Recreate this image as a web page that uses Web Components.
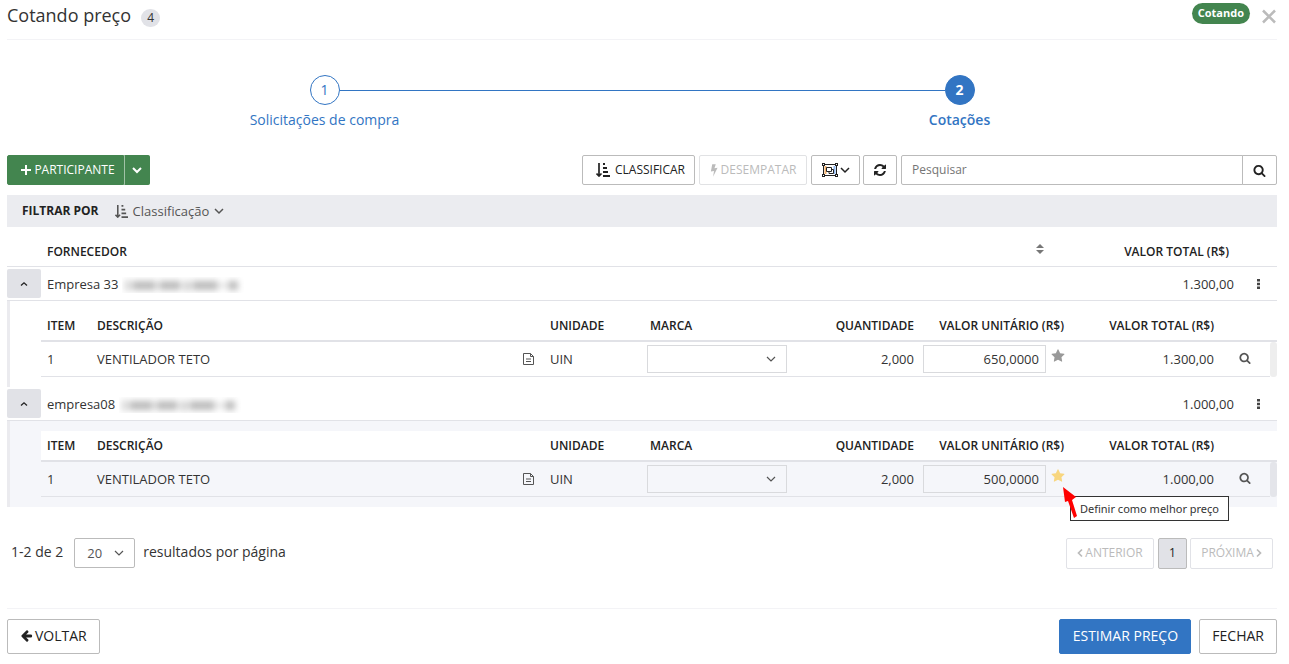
<!DOCTYPE html>
<html lang="pt-BR">
<head>
<meta charset="utf-8">
<title>Cotando preço</title>
<meta name="viewport" content="width=device-width, initial-scale=1">
<style>
  body { margin: 0; background: #fff; color: #333; font: 13px/20px "Open Sans", "Noto Sans", sans-serif; }
</style>
</head>
<body>
<quote-page>
  <page-header slot="header" count="4" status="Cotando">Cotando preço</page-header>
  <step-list slot="steps">
    <step-item number="1">Solicitações de compra</step-item>
    <step-item number="2" current>Cotações</step-item>
  </step-list>
  <quote-toolbar slot="toolbar"></quote-toolbar>
  <filter-bar slot="filter"></filter-bar>
  <supplier-table slot="table"></supplier-table>
  <page-nav slot="nav"></page-nav>
  <page-footer slot="footer"></page-footer>
</quote-page>

<script>
const ICONS = {
  plus: '<path d="M6 1v10M1 6h10" stroke="currentColor" stroke-width="2" fill="none"/>|12 12',
  close: '<path d="M1.500 1.500l12 12M13.500 1.500l-12 12" stroke="currentColor" stroke-width="2.500" fill="none"/>|15 15',
  down: '<path d="M1 3l4 4 4-4" stroke="currentColor" stroke-width="1.500" fill="none"/>|10 10',
  thin: '<path d="M1 3l4 4 4-4" stroke="currentColor" stroke-width="1.200" fill="none"/>|10 10',
  downbold: '<path d="M1 3l4 4 4-4" stroke="currentColor" stroke-width="2" fill="none"/>|10 10',
  up: '<path d="M2 6.500L5 3.800l3 2.700" stroke="currentColor" stroke-width="1.300" fill="none"/>|10 10',
  left: '<path d="M5 1.500L1.500 5 5 8.500" stroke="currentColor" stroke-width="1.700" fill="none"/>|6 10',
  right: '<path d="M1 1.500L4.500 5 1 8.500" stroke="currentColor" stroke-width="1.700" fill="none"/>|6 10',
  sort: '<path d="M3 0v12M0.500 10.500L3 13 5.500 10.500" stroke="currentColor" stroke-width="1.700" fill="none"/><path d="M7 0h2v2H7zM7 4h4v2H7zM7 8h5v2H7zM7 12h7v2H7z" fill="currentColor"/>|14 14',
  bolt: '<path d="M2.500 0h4L5 4.500 8.500 3.800 3.500 14l1-6.500L1 8.200z" fill="currentColor"/>|9 14',
  updown: '<path d="M0 4L4 0l4 4zM0 6h8L4 10z" fill="currentColor"/>|8 10',
  dots: '<path d="M0 0h3v2.500H0zM0 3.800h3v2.500H0zM0 7.500h3V10H0z" fill="currentColor"/>|3 10',
  file: '<path d="M0.500 0.500h7l3 3v8h-10zM7.500 0.500v3h3M3 6h5M3 8.500h5" stroke="currentColor" fill="none"/>|11 12',
  group: '<path d="M3.500 3v8" stroke="#f3b06a" stroke-width="2"/><path d="M12.500 3v8" stroke="#8fb8f0" stroke-width="2"/><path d="M1.500 1.500h13v11h-13z" stroke="#222" fill="none"/><path d="M4.500 4.500h5v4h-5zM9.500 6.500h2v4H7v-2" stroke="#222" fill="none"/><path d="M0 0h3v3H0zM13 0h3v3h-3zM0 11h3v3H0zM13 11h3v3h-3z" fill="#222"/><path d="M1 1h1v1H1zM14 1h1v1h-1zM1 12h1v1H1zM14 12h1v1h-1z" fill="#fff"/>|16 14',
  refresh: '<path d="M1639 1056q0 5-1 7-64 268-268 434.500t-478 166.500q-146 0-282.500-55t-243.500-157l-129 129q-19 19-45 19t-45-19-19-45v-448q0-26 19-45t45-19h448q26 0 45 19t19 45-19 45l-137 137q71 66 161 102t187 36q134 0 250-65t186-179q11-17 53-117 8-23 30-23h192q13 0 22.500 9.500t9.500 22.500zm25-800v448q0 26-19 45t-45 19h-448q-26 0-45-19t-19-45 19-45l138-138q-148-137-349-137-134 0-250 65t-186 179q-11 17-53 117-8 23-30 23h-199q-13 0-22.500-9.500t-9.500-22.500v-7q65-268 270-434.500t480-166.500q146 0 284 55.500t245 156.500l130-129q19-19 45-19t45 19 19 45z" fill="currentColor"/>|1792 1792',
  search: '<path d="M1216 832q0-185-131.500-316.500t-316.500-131.500-316.500 131.500-131.500 316.500 131.500 316.500 316.500 131.500 316.500-131.500 131.500-316.500zm512 832q0 52-38 90t-90 38q-54 0-90-38l-343-342q-179 124-399 124-143 0-273.500-55.500t-225-150-150-225-55.500-273.500 55.500-273.500 150-225 225-150 273.500-55.500 273.500 55.500 225 150 150 225 55.500 273.500q0 220-124 399l343 343q37 37 37 90z" fill="currentColor"/>|1792 1792',
  star: '<path d="M1728 647q0 22-26 48l-363 354 86 500q1 7 1 20 0 21-10.500 35.500t-30.500 14.500q-19 0-40-12l-449-236-449 236q-22 12-40 12-21 0-31.500-14.500t-10.500-35.500q0-6 2-20l86-500-364-354q-25-27-25-48 0-37 56-46l502-73 225-455q19-41 49-41t49 41l225 455 502 73q56 9 56 46z" fill="currentColor"/>|1792 1792',
  back: '<path d="M1664 896v128q0 53-32.500 90.500t-84.500 37.500h-704l293 294q38 36 38 90t-38 90l-75 76q-37 37-90 37-52 0-91-37l-651-652q-37-37-37-90 0-52 37-91l651-650q38-38 91-38 52 0 90 38l75 74q38 38 38 91t-38 91l-293 293h704q52 0 84.500 37.500t32.500 90.500z" fill="currentColor"/>|1792 1920',
  arrow: '<path d="M0 0l2 15 3-1 6 17 3-2L9 13l4-3z" fill="#f00"/>|16 32'
};

const BASE = `
  *, *::before { box-sizing: border-box; }
  :host { display: block; }
  button, input, select { font: inherit; color: inherit; margin: 0; }
  button { display: inline-flex; align-items: center; justify-content: center; gap: 4px; padding: 0 12px;
           border: 1px solid #bbb; border-radius: 2px; background: #fff; color: #222; white-space: nowrap; }
  select { appearance: none; background: transparent; outline: 0; border-radius: 0; }
  .pick { position: relative; display: inline-block; }
  .pick ui-icon { position: absolute; top: 0; bottom: 0; right: 11px; margin: auto 0; pointer-events: none; }
`;

function define(name, css, html) {
  customElements.define(name, class extends HTMLElement {
    connectedCallback() {
      if (this.shadowRoot) return;
      const t = document.createElement('template');
      t.innerHTML = `<style>${BASE}${css}</style>` + (typeof html === 'function' ? html(this) : html);
      this.attachShadow({ mode: 'open' }).append(t.content.cloneNode(true));
    }
  });
}

define('ui-icon', `
  :host { display: inline-block; flex: none; width: var(--w, 12px); height: var(--h, 12px); }
  svg { display: block; width: 100%; height: 100%; }
`, el => {
  const [shape, box] = ICONS[el.getAttribute('name')].split('|');
  return `<svg viewBox="0 0 ${box}" aria-hidden="true">${shape}</svg>`;
});

define('quote-page', `
  :host { padding: 0 12px 10px 7px; }
`, `<slot name="header"></slot>
<main><slot name="steps"></slot><slot name="toolbar"></slot><slot name="filter"></slot><slot name="table"></slot><slot name="nav"></slot></main>
<slot name="footer"></slot>`);

define('page-header', `
  header { display: flex; align-items: flex-start; height: 40px; border-bottom: 1px solid #f3f3f6; }
  h1 { margin: 3px 10px 0 0; font-size: 18px; line-height: 24px; font-weight: 400; }
  .count { margin-top: 9px; width: 19px; height: 18px; border-radius: 9px; background: #e1e2e7; font-size: 12px; line-height: 18px; text-align: center; }
  .status { margin: 3px 11px 0 auto; height: 21px; padding: 0 6px; border-radius: 11px; background: #43854f; color: #fff; font-size: 11px; line-height: 20px; font-weight: 700; }
  button { border: 0; padding: 0; margin-top: 9px; color: #bbb; --w: 16px; --h: 15px; }
`, el => `<header><h1><slot></slot></h1><span class="count">${el.getAttribute('count')}</span>
<span class="status">${el.getAttribute('status')}</span><button aria-label="Fechar janela"><ui-icon name="close"></ui-icon></button></header>`);

define('step-list', `
  nav { display: grid; grid-template-columns: 1fr 1fr; padding-top: 35px; height: 115px; }
`, '<nav aria-label="Etapas"><slot></slot></nav>');

define('step-item', `
  a { display: block; color: #3275c3; font-size: 14px; line-height: 20px; text-align: center; text-decoration: none; }
  .mark { display: flex; align-items: center; margin-bottom: 5px; }
  .mark::before, .mark::after { content: ""; flex: 1; height: 1px; background: #3275c3; }
  :host(:first-child) .mark::before, :host(:last-child) .mark::after { background: none; }
  .num { width: 30px; height: 30px; border: 1px solid #3275c3; border-radius: 50%; line-height: 28px; }
  :host([current]) a { font-weight: 600; }
  :host([current]) .num { background: #3275c3; color: #fff; font-weight: 700; }
`, el => `<a href="#etapa-${el.getAttribute('number')}"><span class="mark"><span class="num">${el.getAttribute('number')}</span></span><slot></slot></a>`);

define('quote-toolbar', `
  .bar { display: flex; height: 30px; gap: 4px; font-size: 12px; }
  .split { display: flex; margin-right: auto; }
  .split button { background: #43854f; border-color: #43854f; color: #fff; }
  .split .add { width: 117px; padding: 0; gap: 2px; border-radius: 2px 0 0 2px; padding-left: 4px; }
  .split .more { width: 26px; padding: 0; border-radius: 0 2px 2px 0; border-left-color: #a1c2a7; }
  .rank { width: 113px; gap: 5px; padding: 0 8px 0 12px; --w: 14px; --h: 14px; }
  .tie { width: 108px; gap: 3px; padding: 0; border-color: #e1e2e4; color: #bbb; --w: 8px; --h: 13px; }
  .group { width: 49px; gap: 2px; padding: 0; }
  .sync { width: 34px; padding: 0; margin-left: -1px; --w: 14px; --h: 14px; }
  form { display: flex; width: 376px; }
  input { flex: 1; min-width: 0; padding: 0 10px; border: 1px solid #bbb; border-radius: 2px 0 0 2px; outline: 0; background: #fff; }
  input::placeholder { color: #757575; opacity: 1; }
  form button { width: 35px; padding: 0; border-left-color: #bbb; margin-left: -1px; border-radius: 0 2px 2px 0; --w: 13px; --h: 13px; }
`, `<div class="bar">
  <div class="split"><button class="add"><ui-icon name="plus"></ui-icon>PARTICIPANTE</button><button class="more" aria-label="Mais opções"><ui-icon name="downbold" style="--w:10px;--h:10px"></ui-icon></button></div>
  <button class="rank"><ui-icon name="sort"></ui-icon>CLASSIFICAR</button>
  <button class="tie" disabled><ui-icon name="bolt"></ui-icon>DESEMPATAR</button>
  <button class="group" aria-label="Agrupar"><ui-icon name="group" style="--w:16px;--h:14px"></ui-icon><ui-icon name="down" style="--w:10px;--h:10px"></ui-icon></button>
  <button class="sync" aria-label="Atualizar"><ui-icon name="refresh"></ui-icon></button>
  <form role="search"><input type="search" placeholder="Pesquisar" aria-label="Pesquisar"><button type="button" aria-label="Buscar"><ui-icon name="search"></ui-icon></button></form>
</div>`);

define('filter-bar', `
  .bar { display: flex; align-items: center; height: 32px; margin-top: 10px; padding-left: 15px; background: #ebecf0; }
  strong { font-size: 12px; color: #222; font-weight: 700; margin-right: 16px; }
  button { padding: 0; border: 0; gap: 5px; background: none; color: #555; }
`, `<div class="bar"><strong>FILTRAR POR</strong><button><ui-icon name="sort" style="--w:13px;--h:13px"></ui-icon>Classificação<ui-icon name="down" style="--w:10px;--h:10px"></ui-icon></button></div>`);

define('masked-id', `
  :host { display: inline-block; width: 122px; height: 16px; vertical-align: middle; overflow: hidden; }
  svg { display: block; filter: blur(3px); }
`, `<svg width="122" height="16" aria-hidden="true">
<path d="M4 3h3v11H4zM10 4h24v9H10zM37 4h22v9H37zM63 4h4v10h-4zM70 4h26v9H70zM99 7h4v3h-4zM106 4h10v9h-10z" fill="#bbb"/></svg>`);

define('supplier-table', `
  table { width: 100%; border-collapse: separate; border-spacing: 0; table-layout: fixed; }
  th, td { padding: 0; text-align: left; }
  thead th { height: 40px; padding-top: 10px; border-bottom: 1px solid #e1e2e7; font-size: 12px; font-weight: 600; color: #222; }
  thead th:nth-child(2), .name { padding-left: 6px; }
  .supplier td { height: 34px; border-bottom: 1px solid #e1e2e7; }
  .toggle { width: 34px; height: 29px; padding: 0; border: 0; background: #e1e2e7; display: flex; --w: 10px; --h: 10px; }
  .num { text-align: right; padding-right: 3px; }
  thead .num { padding-right: 8px; }
  .menu { width: 100%; border: 0; background: none; padding: 0 0 0 2px; color: #444; --w: 3px; --h: 10px; }
  .sort { padding: 0; border: 0; color: #777; background: none; --w: 8px; --h: 10px; vertical-align: top; margin-top: 2px; }
  .detail td { height: 86px; padding: 10px 0 0 34px; vertical-align: top; box-shadow: inset 3px 0 #ebebef; }
  .best td { background: #f5f6fa; }
`, () => {
  const supplier = (name, total, unit, best) => `
  <tr class="supplier"><td><button class="toggle" aria-label="Recolher" aria-expanded="true"><ui-icon name="up"></ui-icon></button></td>
    <td class="name">${name} <masked-id></masked-id></td><td></td><td class="num">${total}</td><td><button class="menu" aria-label="Ações"><ui-icon name="dots"></ui-icon></button></td></tr>
  <tr class="detail${best ? ' best' : ''}"><td colspan="5"><item-table total="${total}" unit="${unit}"${best ? ' best' : ''}></item-table></td></tr>`;
  return `<table><colgroup><col style="width:34px"><col><col style="width:50px"><col style="width:151px"><col style="width:40px"></colgroup>
  <thead><tr><th></th><th>FORNECEDOR</th><th><button class="sort" aria-label="Ordenar"><ui-icon name="updown"></ui-icon></button></th><th class="num">VALOR TOTAL (R$)</th><th></th></tr></thead>
  <tbody>${supplier('Empresa 33', '1.300,00', '650,0000', false)}${supplier('empresa08', '1.000,00', '500,0000', true)}</tbody></table>`;
});

define('item-table', `
  table { width: 100%; border-collapse: separate; border-spacing: 0; table-layout: fixed; }
  th, td { padding: 0 6px; text-align: left; }
  th { height: 31px; background: #fff; border-bottom: 2px solid #e1e2e7; font-size: 12px; font-weight: 600; color: #222; white-space: nowrap; }
  td { height: 35px; border-bottom: 1px solid #e1e2e7; }
  td.field { padding: 0 3px; }
  .num { text-align: right; }
  .desc { display: flex; align-items: center; justify-content: space-between; padding-right: 4px; color: #555; --w: 11px; --h: 12px; }
  .desc span { color: #333; }
  .pick, select { display: block; width: 140px; height: 28px; }
  .pick { --w: 10px; --h: 10px; color: #555; }
  select, input { border: 1px solid #d9dadd; }
  .price { display: flex; align-items: center; gap: 5px; position: relative; }
  input { width: 123px; height: 28px; padding: 0 6px; text-align: right; background: transparent; border-radius: 0; outline: 0; }
  .star { border: 0; padding: 0; background: none; color: #999; margin-bottom: 6px; --w: 14px; --h: 14px; }
  :host([best]) .star { color: #f8d67f; }
  .look { border: 0; padding: 0; width: 100%; background: none; color: #555; --w: 12px; --h: 12px; }
  .rail { padding: 0; border: 0; }
  .rail i { display: block; height: 35px; border-radius: 3px; background: #eee; }
  :host([best]) .rail i { background: #e4e5ea; }
  .tip { position: absolute; z-index: 2; left: 147px; top: 31px; width: 159px; height: 25px; padding: 0 7px; border: 1px solid #333; background: #fff; font-family: "Noto Sans", sans-serif; font-size: 11px; line-height: 23px; text-align: center; white-space: nowrap; }
  .pointer { position: absolute; z-index: 3; left: 140px; top: 22px; --w: 16px; --h: 32px; }
`, el => `<table><colgroup><col style="width:50px"><col><col style="width:100px"><col style="width:176px"><col style="width:100px"><col style="width:150px"><col style="width:150px"><col style="width:50px"><col style="width:7px"></colgroup>
<thead><tr><th>ITEM</th><th>DESCRIÇÃO</th><th>UNIDADE</th><th>MARCA</th><th class="num">QUANTIDADE</th><th class="num">VALOR UNITÁRIO (R$)</th><th class="num">VALOR TOTAL (R$)</th><th></th><th></th></tr></thead>
<tbody><tr><td>1</td><td><div class="desc"><span>VENTILADOR TETO</span><ui-icon name="file"></ui-icon></div></td><td>UIN</td>
<td class="field"><div class="pick"><select aria-label="Marca"><option></option></select><ui-icon name="thin"></ui-icon></div></td>
<td class="num">2,000</td>
<td class="field"><div class="price"><input aria-label="Valor unitário" value="${el.getAttribute('unit')}"><button class="star" aria-label="Melhor preço"><ui-icon name="star"></ui-icon></button>${el.hasAttribute('best') ? '<span class="tip" role="tooltip">Definir como melhor preço</span><ui-icon class="pointer" name="arrow"></ui-icon>' : ''}</div></td>
<td class="num">${el.getAttribute('total')}</td><td><button class="look" aria-label="Ver item"><ui-icon name="search"></ui-icon></button></td><td class="rail"><i></i></td></tr></tbody></table>`);

define('page-nav', `
  .bar { display: flex; justify-content: space-between; height: 31px; margin: 31px 4px 39px; }
  .size { display: flex; font-size: 14px; line-height: 28px; gap: 8px; }
  .size span:first-child { margin-right: 3px; }
  .pick { height: 30px; --w: 10px; --h: 10px; color: #555; }
  select { width: 61px; height: 30px; padding: 0 12px; border: 1px solid #bbb; border-radius: 2px; font-size: 13px; display: block; }
  nav { display: flex; gap: 4px; font-size: 12px; --w: 6px; --h: 10px; }
  nav button { gap: 2px; color: #222; padding: 0 0 2px; }
  nav button:disabled { border-color: #e1e2e7; color: #bbb; }
  .prev { width: 88px; } .page { width: 29px; background: #e1e2e7; } .next { width: 83px; margin-left: -1px; }
`, `<div class="bar"><div class="size"><span>1-2 de 2</span><div class="pick"><select aria-label="Resultados por página"><option>20</option></select><ui-icon name="thin"></ui-icon></div><span>resultados por página</span></div>
<nav aria-label="Paginação"><button class="prev" disabled><ui-icon name="left"></ui-icon>ANTERIOR</button><button class="page" aria-current="page">1</button><button class="next" disabled>PRÓXIMA<ui-icon name="right"></ui-icon></button></nav></div>`);

define('page-footer', `
  footer { display: flex; gap: 8px; padding-top: 10px; border-top: 1px solid #f3f3f6; font-size: 14px; }
  button { height: 35px; padding: 0 12px 2px; }
  .back { margin-right: auto; gap: 2px; --w: 13px; --h: 14px; }
  .main { width: 132px; padding: 0 0 2px; background: #3275c3; border-color: #3275c3; color: #fff; }
`, `<footer><button class="back"><ui-icon name="back"></ui-icon>VOLTAR</button><button class="main">ESTIMAR PREÇO</button><button>FECHAR</button></footer>`);
</script>
</body>
</html>
